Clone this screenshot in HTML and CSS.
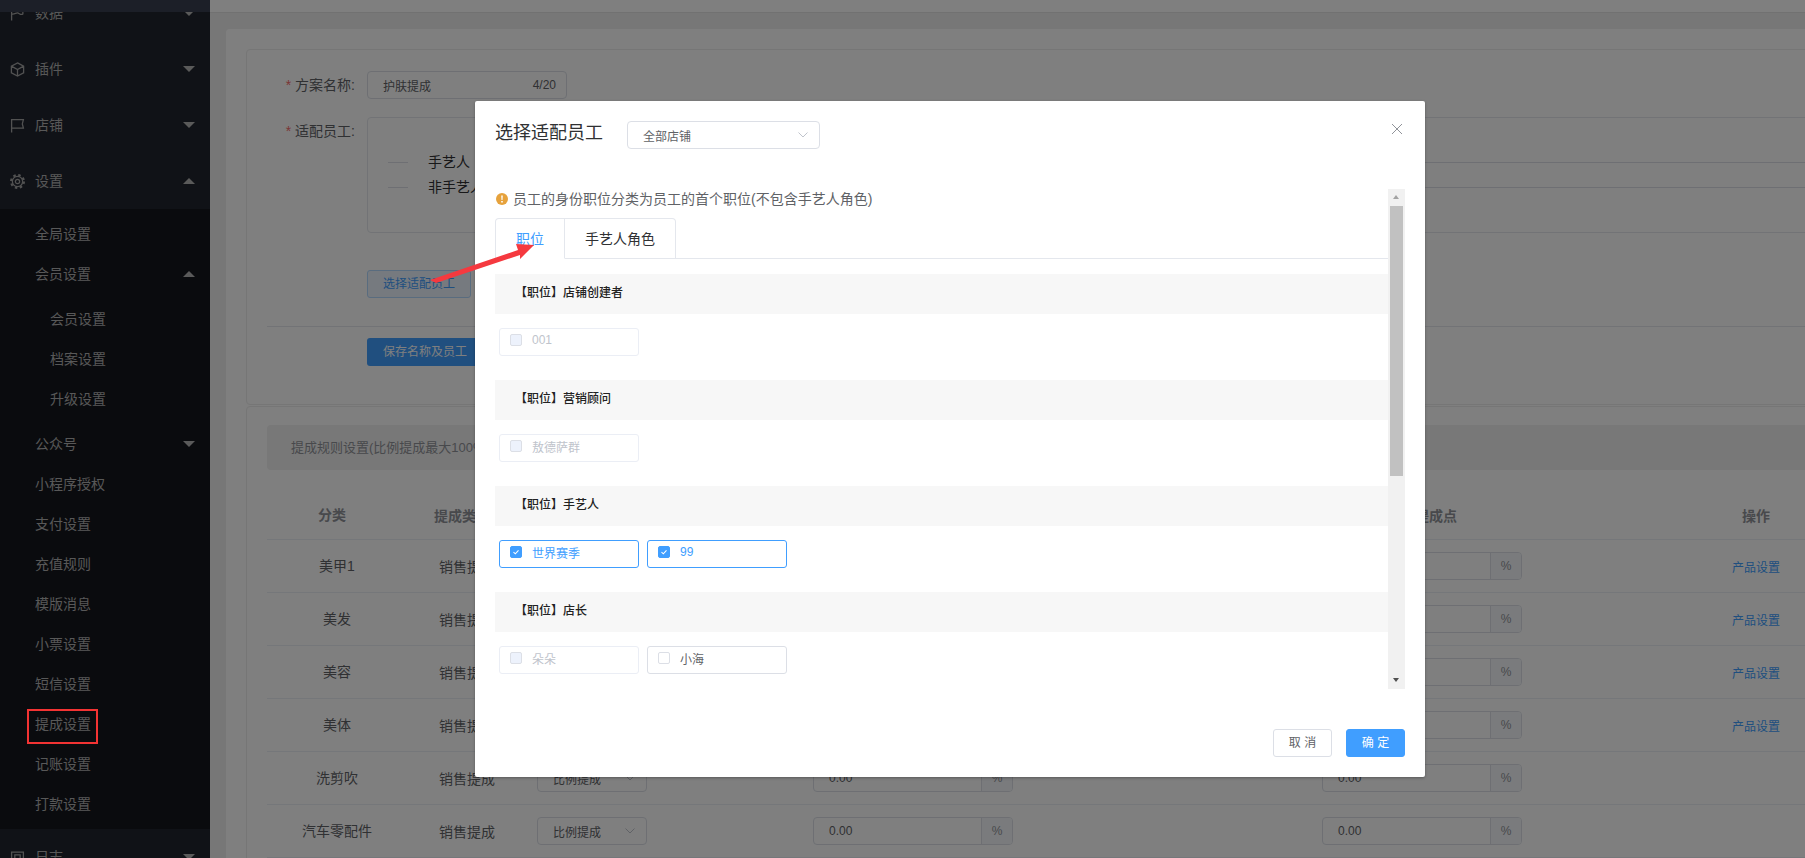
FILE: index.html
```html
<!DOCTYPE html>
<html lang="zh-CN">
<head>
<meta charset="utf-8">
<title>提成设置</title>
<link rel="stylesheet" href="styles.css">
</head>
<body>
<div class="app">
  <aside class="sidebar">
    <div class="sidebar-cap"></div>
    <div class="nav-row clipped">
      <svg class="nav-icon" viewBox="0 0 14 14"><path d="M1.500 13.500V1.500h10.500v6C10 9 8.500 6.500 7 6.500S4 8 1.500 7.500"/></svg>
      <span class="nav-label">数据</span><i class="tri down"></i>
    </div>
    <div class="nav-row">
      <svg class="nav-icon" viewBox="0 0 14 14"><path d="M7 .8l5.700 3.100v6.200L7 13.200 1.300 10.100V3.900zM1.300 3.900L7 7l5.700-3.100M7 7v6.200"/></svg>
      <span class="nav-label">插件</span><i class="tri down"></i>
    </div>
    <div class="nav-row">
      <svg class="nav-icon" viewBox="0 0 14 14"><path d="M1.500 13.500V1.500h11l-1 4 1 4H1.500"/></svg>
      <span class="nav-label">店铺</span><i class="tri down"></i>
    </div>
    <div class="nav-row">
      <svg class="nav-icon gear" viewBox="0 0 14 14"><circle cx="7" cy="7" r="4.800"/><circle cx="7" cy="7" r="2"/><circle class="gear-teeth" cx="7" cy="7" r="6"/></svg>
      <span class="nav-label">设置</span><i class="tri up"></i>
    </div>
    <div class="sub-nav">
      <div class="sub-row">全局设置</div>
      <div class="sub-row">会员设置<i class="tri up"></i></div>
      <div class="sub-group">
        <div class="sub-row deep">会员设置</div>
        <div class="sub-row deep">档案设置</div>
        <div class="sub-row deep">升级设置</div>
      </div>
      <div class="sub-row">公众号<i class="tri down"></i></div>
      <div class="sub-row">小程序授权</div>
      <div class="sub-row">支付设置</div>
      <div class="sub-row">充值规则</div>
      <div class="sub-row">模版消息</div>
      <div class="sub-row">小票设置</div>
      <div class="sub-row">短信设置</div>
      <div class="sub-row">提成设置</div>
      <div class="sub-row">记账设置</div>
      <div class="sub-row">打款设置</div>
    </div>
    <div class="nav-row">
      <svg class="nav-icon" viewBox="0 0 14 14"><path d="M1.500 2h11v11h-11zM4.500 4.500h5v5h-5z"/></svg>
      <span class="nav-label">日志</span><i class="tri down"></i>
    </div>
  </aside>

  <main class="main">
    <div class="topbar"></div>
    <div class="outer-card">
      <section class="inner-card form-card">
        <div class="form-row">
          <div class="form-label"><span class="star">*</span> 方案名称:</div>
          <div class="name-input"><span>护肤提成</span><span class="count">4/20</span></div>
        </div>
        <div class="form-row staff-row">
          <div class="form-label"><span class="star">*</span> 适配员工:</div>
          <div class="staff-box">
            <div class="divider"><span class="divider-lead"></span><span class="divider-text">手艺人</span><span class="divider-rest"></span></div>
            <div class="divider"><span class="divider-lead"></span><span class="divider-text">非手艺人</span><span class="divider-rest"></span></div>
          </div>
        </div>
        <div class="form-row pick-row">
          <div class="form-label"></div>
          <div class="btn-plain">选择适配员工</div>
        </div>
        <div class="form-rule"></div>
        <div class="form-row">
          <div class="form-label"></div>
          <div class="btn-primary">保存名称及员工</div>
        </div>
      </section>

      <section class="inner-card rule-card">
        <div class="rule-band">提成规则设置(比例提成最大100%)</div>
        <div class="t-row t-head">
          <div class="c-cat">分类</div>
          <div class="c-type">提成类型</div>
          <div class="c-mode">提成方式</div>
          <div class="c-a">提成点</div>
          <div class="c-b">销售提成点</div>
          <div class="c-op">操作</div>
        </div>
        <div class="t-row">
          <div class="c-cat">美甲1</div><div class="c-type">销售提成</div>
          <div class="c-mode"><div class="pick">比例提成<svg class="chev" viewBox="0 0 10 6"><path d="M.5.5L5 5 9.500.5"/></svg></div></div>
          <div class="c-a"><div class="pct"><span class="pct-val">0.00</span><span class="pct-unit">%</span></div></div>
          <div class="c-b"><div class="pct"><span class="pct-val">0.00</span><span class="pct-unit">%</span></div></div>
          <div class="c-op link">产品设置</div>
        </div>
        <div class="t-row">
          <div class="c-cat">美发</div><div class="c-type">销售提成</div>
          <div class="c-mode"><div class="pick">比例提成<svg class="chev" viewBox="0 0 10 6"><path d="M.5.5L5 5 9.500.5"/></svg></div></div>
          <div class="c-a"><div class="pct"><span class="pct-val">0.00</span><span class="pct-unit">%</span></div></div>
          <div class="c-b"><div class="pct"><span class="pct-val">0.00</span><span class="pct-unit">%</span></div></div>
          <div class="c-op link">产品设置</div>
        </div>
        <div class="t-row">
          <div class="c-cat">美容</div><div class="c-type">销售提成</div>
          <div class="c-mode"><div class="pick">比例提成<svg class="chev" viewBox="0 0 10 6"><path d="M.5.5L5 5 9.500.5"/></svg></div></div>
          <div class="c-a"><div class="pct"><span class="pct-val">0.00</span><span class="pct-unit">%</span></div></div>
          <div class="c-b"><div class="pct"><span class="pct-val">0.00</span><span class="pct-unit">%</span></div></div>
          <div class="c-op link">产品设置</div>
        </div>
        <div class="t-row">
          <div class="c-cat">美体</div><div class="c-type">销售提成</div>
          <div class="c-mode"><div class="pick">比例提成<svg class="chev" viewBox="0 0 10 6"><path d="M.5.5L5 5 9.500.5"/></svg></div></div>
          <div class="c-a"><div class="pct"><span class="pct-val">0.00</span><span class="pct-unit">%</span></div></div>
          <div class="c-b"><div class="pct"><span class="pct-val">0.00</span><span class="pct-unit">%</span></div></div>
          <div class="c-op link">产品设置</div>
        </div>
        <div class="t-row">
          <div class="c-cat">洗剪吹</div><div class="c-type">销售提成</div>
          <div class="c-mode"><div class="pick">比例提成<svg class="chev" viewBox="0 0 10 6"><path d="M.5.5L5 5 9.500.5"/></svg></div></div>
          <div class="c-a"><div class="pct"><span class="pct-val">0.00</span><span class="pct-unit">%</span></div></div>
          <div class="c-b"><div class="pct"><span class="pct-val">0.00</span><span class="pct-unit">%</span></div></div>
          <div class="c-op"></div>
        </div>
        <div class="t-row">
          <div class="c-cat">汽车零配件</div><div class="c-type">销售提成</div>
          <div class="c-mode"><div class="pick">比例提成<svg class="chev" viewBox="0 0 10 6"><path d="M.5.5L5 5 9.500.5"/></svg></div></div>
          <div class="c-a"><div class="pct"><span class="pct-val">0.00</span><span class="pct-unit">%</span></div></div>
          <div class="c-b"><div class="pct"><span class="pct-val">0.00</span><span class="pct-unit">%</span></div></div>
          <div class="c-op"></div>
        </div>
      </section>
    </div>
  </main>
</div>

<div class="mask"></div>

<div class="modal">
  <header class="modal-head">
    <h2 class="modal-title">选择适配员工</h2>
    <div class="shop-pick">全部店铺<svg class="chev" viewBox="0 0 10 6"><path d="M.5.5L5 5 9.500.5"/></svg></div>
    <svg class="modal-close" viewBox="0 0 12 12"><path d="M1 1l10 10M11 1L1 11"/></svg>
  </header>
  <div class="modal-body">
    <div class="scroll-content">
      <div class="notice">
        <svg class="notice-icon" viewBox="0 0 12 12"><circle cx="6" cy="6" r="6"/><path class="notice-mark" d="M5.200 2.500h1.600l-.3 4.500h-1zM5.200 8h1.600v1.500H5.200z"/></svg>
        <span>员工的身份职位分类为员工的首个职位(不包含手艺人角色)</span>
      </div>
      <div class="tabs">
        <div class="tab active">职位</div>
        <div class="tab">手艺人角色</div>
      </div>
      <div class="band">【职位】店铺创建者</div>
      <div class="chips">
        <div class="chip disabled"><i class="box"></i>001</div>
      </div>
      <div class="band">【职位】营销顾问</div>
      <div class="chips">
        <div class="chip disabled"><i class="box"></i>敖德萨群</div>
      </div>
      <div class="band">【职位】手艺人</div>
      <div class="chips">
        <div class="chip checked"><i class="box"><svg viewBox="0 0 12 12"><path d="M3 6.200l2.200 2L9 4"/></svg></i>世界赛季</div>
        <div class="chip checked"><i class="box"><svg viewBox="0 0 12 12"><path d="M3 6.200l2.200 2L9 4"/></svg></i>99</div>
      </div>
      <div class="band">【职位】店长</div>
      <div class="chips">
        <div class="chip disabled"><i class="box"></i>朵朵</div>
        <div class="chip"><i class="box"></i>小海</div>
      </div>
    </div>
    <div class="scrollbar">
      <i class="sb-arrow sb-up"></i>
      <div class="sb-track"><div class="sb-thumb"></div></div>
      <i class="sb-arrow sb-down"></i>
    </div>
  </div>
  <footer class="modal-foot">
    <div class="foot-btn">取 消</div>
    <div class="foot-btn confirm">确 定</div>
  </footer>
</div>

<div class="mark-box"></div>
<svg class="mark-arrow" viewBox="0 0 1805 858"><polygon points="430,280 518,250 516,244 534,245 520,259 520,255 436,283"/></svg>
</body>
</html>
```

FILE: styles.css
```css
* { box-sizing: border-box; }
html, body {
  margin: 0;
  width: 1805px;
  height: 858px;
  overflow: hidden;
}
body {
  font-family: "Liberation Sans", "Noto Sans CJK SC", sans-serif;
  font-size: 14px;
  color: #606266;
  background: #efefef;
}
i { font-style: normal; display: block; }

.app { display: flex; width: 1805px; height: 858px; overflow: hidden; }

/* sidebar */
.sidebar {
  position: relative;
  width: 210px;
  flex: none;
  background: #20242f;
  color: #b0b0b0;
}
.sidebar-cap {
  position: absolute;
  left: 0;
  top: 0;
  width: 210px;
  height: 12px;
  background: #1c1f28;
  z-index: 1;
}
.nav-row {
  height: 56px;
  display: flex;
  align-items: center;
  padding: 0 15px 0 10px;
  line-height: 20px;
}
.nav-row.clipped { margin-top: -15px; }
.nav-icon {
  width: 15px;
  height: 15px;
  flex: none;
  margin-right: 10px;
  fill: none;
  stroke: #a4a4a4;
  stroke-width: 1.2;
}
.gear-teeth { stroke-width: 2; stroke-dasharray: 2.300 2.412; }
.nav-label { flex: 1; }
.tri { width: 0; height: 0; border-left: 6px solid transparent; border-right: 6px solid transparent; }
.tri.down { border-top: 6px solid #b4b4b4; }
.tri.up { border-bottom: 6px solid #b4b4b4; }
.sub-nav { background: #14161d; padding: 5px 0; }
.sub-row {
  height: 40px;
  display: flex;
  align-items: center;
  justify-content: space-between;
  padding: 0 15px 1px 35px;
  line-height: 20px;
}
.sub-row.deep { padding-left: 50px; }
.sub-group { padding: 5px 0; }

/* page */
.main { flex: none; width: 1595px; overflow: hidden; }
.topbar { height: 13px; background: #fff; border-bottom: 1px solid #e3e3e3; }
.outer-card {
  width: 1640px;
  margin: 16px 0 0 16px;
  padding: 20px;
  background: #fff;
  border-radius: 4px;
}
.inner-card { border: 1px solid #ececec; border-radius: 4px; background: #fff; }
.form-card { height: 356px; padding-top: 21px; }
.form-row { display: flex; }
.form-label {
  width: 120px;
  flex: none;
  padding-right: 12px;
  text-align: right;
  line-height: 28px;
  color: #606266;
}
.star { color: #f56c6c; }
.name-input {
  width: 200px;
  height: 28px;
  display: flex;
  justify-content: space-between;
  align-items: center;
  padding: 0 10px 0 15px;
  border: 1px solid #dcdfe6;
  border-radius: 4px;
  font-size: 12px;
}
.count { color: #606266; }
.staff-row { margin-top: 18px; }
.staff-box {
  flex: 1;
  height: 116px;
  margin-right: 20px;
  padding: 32px 0 0 20px;
  border: 1px solid #e4e7ed;
  border-radius: 4px;
}
.divider { display: flex; align-items: center; height: 25px; line-height: 25px; color: #303133; }
.divider-lead { width: 20px; height: 1px; background: #dcdfe6; }
.divider-text { padding: 0 20px; }
.divider-rest { flex: 1; height: 1px; background: #dcdfe6; }
.pick-row { margin-top: 37px; }
.btn-plain {
  height: 28px;
  padding: 0 15px;
  line-height: 26px;
  font-size: 12px;
  color: #409eff;
  background: #ecf5ff;
  border: 1px solid #b3d8ff;
  border-radius: 3px;
}
.form-rule { height: 1px; margin: 28px 20px 11px; background: #e4e7ed; }
.btn-primary {
  height: 28px;
  padding: 0 16px;
  line-height: 28px;
  font-size: 12px;
  color: #fff;
  background: #409eff;
  border-radius: 3px;
}

/* rules table */
.rule-card { margin-top: 1px; padding: 18px 20px 0; height: 500px; }
.rule-band {
  height: 45px;
  padding-left: 24px;
  line-height: 45px;
  font-size: 13px;
  color: #909399;
  background: #f0f0f0;
  border-radius: 4px;
}
.t-row {
  display: grid;
  grid-template-columns: 140px 130px 276px 509px 410px 73px;
  align-items: center;
  height: 53px;
  border-bottom: 1px solid #ebeef5;
}
.t-head { height: 70px; padding-top: 20px; font-weight: 700; color: #909399; }
.c-cat { text-align: center; line-height: 20px; }
.t-head .c-cat { padding-right: 10px; }
.c-type { padding-left: 32px; }
.t-head .c-type { padding-left: 27px; }
.t-head .c-a, .t-head .c-b { text-align: center; width: 200px; }
.t-head .c-op { text-align: center; width: 48px; }
.link { color: #409eff; font-size: 12px; }
.pick {
  width: 110px;
  height: 28px;
  display: flex;
  align-items: center;
  justify-content: space-between;
  padding: 0 11px 0 15px;
  border: 1px solid #dcdfe6;
  border-radius: 4px;
  font-size: 12px;
}
.chev { width: 10px; height: 6px; fill: none; stroke: #c0c4cc; stroke-width: 1; }
.pct {
  width: 200px;
  height: 28px;
  display: flex;
  border: 1px solid #dcdfe6;
  border-radius: 4px;
  font-size: 12px;
  line-height: 26px;
}
.pct-val { flex: 1; padding-left: 15px; color: #606266; }
.pct-unit {
  width: 31px;
  text-align: center;
  color: #909399;
  background: #f5f7fa;
  border-left: 1px solid #dcdfe6;
  border-radius: 0 3px 3px 0;
}

/* overlay */
.mask { position: absolute; left: 0; top: 0; width: 1805px; height: 858px; background: rgba(0, 0, 0, .5); }
.modal {
  position: absolute;
  left: 475px;
  top: 101px;
  width: 950px;
  height: 676px;
  padding: 0 20px;
  background: #fff;
  border-radius: 2px;
  box-shadow: 0 1px 3px rgba(0, 0, 0, .3);
}
.modal-head { height: 88px; display: flex; align-items: flex-start; padding-top: 20px; }
.modal-title {
  margin: 0;
  width: 132px;
  font-size: 18px;
  font-weight: 400;
  line-height: 24px;
  color: #303133;
}
.shop-pick {
  width: 193px;
  height: 28px;
  display: flex;
  align-items: center;
  justify-content: space-between;
  padding: 0 11px 0 15px;
  border: 1px solid #dcdfe6;
  border-radius: 4px;
  font-size: 12px;
  color: #606266;
}
.modal-close {
  width: 12px;
  height: 12px;
  margin: 2px 2px 0 auto;
  fill: none;
  stroke: #909399;
  stroke-width: 1;
}
.modal-body { height: 500px; display: flex; }
.scroll-content { flex: 1; height: 500px; overflow: hidden; }
.notice { height: 29px; display: flex; align-items: flex-start; line-height: 20px; color: #606266; }
.notice-icon { width: 12px; height: 12px; margin: 4px 5px 0 1px; fill: #e6a23c; }
.notice-mark { fill: #fff; }
.tabs { display: flex; height: 41px; border-bottom: 1px solid #e4e7ed; margin-bottom: 15px; }
.tab {
  height: 41px;
  padding: 0 20px;
  line-height: 41px;
  border: 1px solid #e4e7ed;
  border-left: 0;
  color: #303133;
}
.tab:first-child { border-left: 1px solid #e4e7ed; border-radius: 4px 0 0 0; }
.tab:last-child { border-radius: 0 4px 0 0; }
.tab.active { color: #409eff; border-bottom-color: #fff; }
.band {
  height: 40px;
  padding-left: 20px;
  line-height: 39px;
  font-size: 12px;
  font-weight: 500;
  color: #222;
  background: #f7f7f7;
}
.chips { display: flex; gap: 8px; padding: 14px 4px 24px; }
.chip {
  width: 140px;
  height: 28px;
  display: flex;
  align-items: center;
  padding: 0 10px 4px;
  border: 1px solid #dcdfe6;
  border-radius: 3px;
  font-size: 12px;
  color: #606266;
}
.box {
  width: 12px;
  height: 12px;
  margin-right: 10px;
  border: 1px solid #dcdfe6;
  border-radius: 2px;
  background: #fff;
}
.box svg { display: block; width: 10px; height: 10px; fill: none; stroke: #fff; stroke-width: 1.300; }
.chip.disabled { border-color: #ebeef5; color: #c0c4cc; }
.chip.disabled .box { background: #edf2fc; }
.chip.checked { border-color: #409eff; color: #409eff; }
.chip.checked .box { background: #409eff; border-color: #409eff; }
.scrollbar {
  width: 17px;
  flex: none;
  display: flex;
  flex-direction: column;
  background: #f1f1f1;
}
.sb-arrow { height: 17px; flex: none; position: relative; }
.sb-arrow::after {
  content: "";
  position: absolute;
  left: 5px;
  top: 6px;
  border-left: 3.500px solid transparent;
  border-right: 3.500px solid transparent;
}
.sb-up::after { border-bottom: 4px solid #a3a3a3; }
.sb-down::after { border-top: 4px solid #505050; }
.sb-track { flex: 1; padding: 0 2px; }
.sb-thumb { height: 270px; background: #c1c1c1; }
.modal-foot { height: 88px; display: flex; justify-content: flex-end; gap: 14px; padding-top: 40px; }
.foot-btn {
  width: 59px;
  height: 28px;
  line-height: 26px;
  text-align: center;
  font-size: 12px;
  color: #606266;
  border: 1px solid #dcdfe6;
  border-radius: 3px;
}
.foot-btn.confirm { color: #fff; background: #409eff; border-color: #409eff; }

/* annotations on the screenshot */
.mark-box {
  position: absolute;
  left: 27px;
  top: 709px;
  width: 71px;
  height: 35px;
  border: 2px solid #f33333;
}
.mark-arrow {
  position: absolute;
  left: 0;
  top: 0;
  width: 1805px;
  height: 858px;
  fill: #f5393f;
  pointer-events: none;
}
```
